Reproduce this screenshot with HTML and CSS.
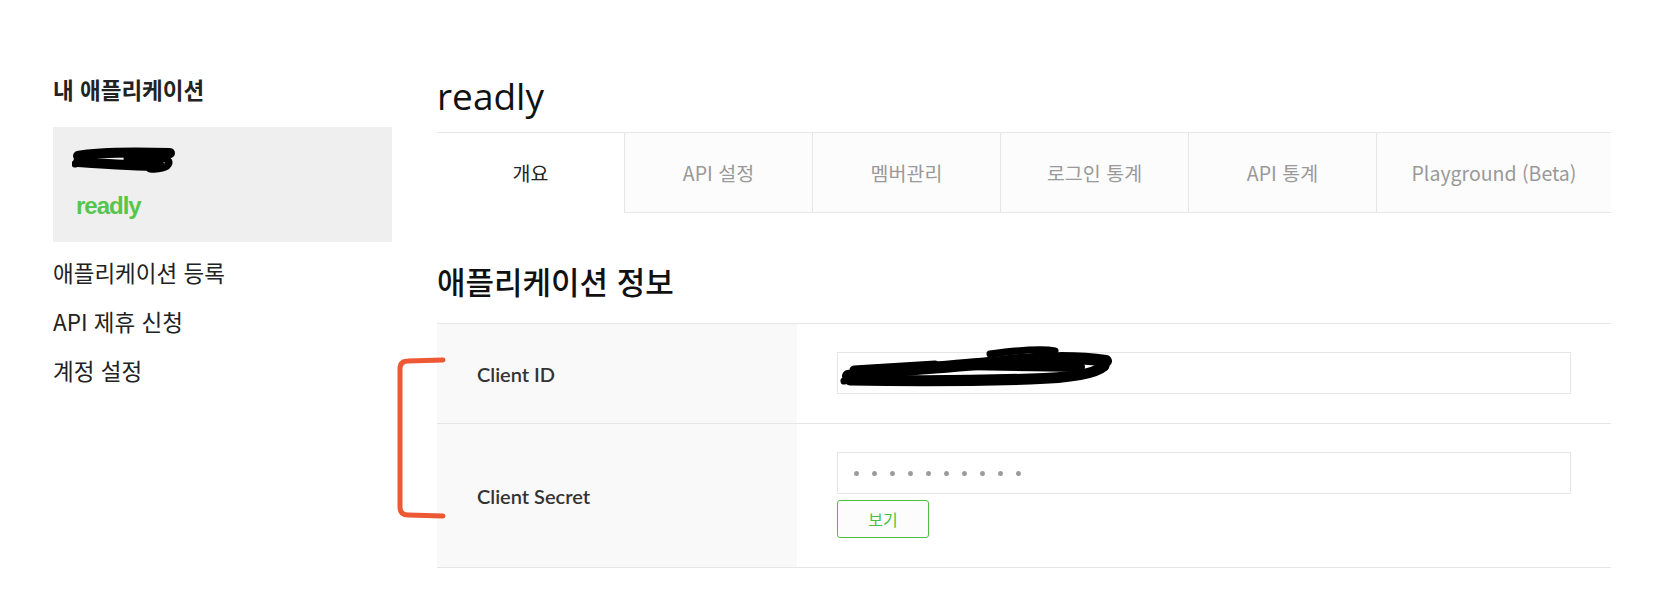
FILE: index.html
```html
<!DOCTYPE html>
<html lang="ko">
<head>
<meta charset="utf-8">
<title>readly - 내 애플리케이션</title>
<link rel="stylesheet" href="styles.css">
</head>
<body>
<div class="page">
  <aside class="sidebar">
    <h2 class="side-title">내 애플리케이션</h2>
    <div class="app-card">
      <div class="redact-small">
        <svg width="108" height="30" viewBox="0 0 108 30">
          <path d="M6,11 C25,7 60,7 98,8" fill="none" stroke="#000" stroke-width="10" stroke-linecap="round"/>
          <path d="M6,17 C35,19 70,21 88,21" fill="none" stroke="#000" stroke-width="10" stroke-linecap="round"/>
          <path d="M55,14 C80,12 98,12 97,18 C96,23 86,25 78,24" fill="none" stroke="#000" stroke-width="7" stroke-linecap="round"/>
          <path d="M3,19 L22,14" fill="none" stroke="#000" stroke-width="7" stroke-linecap="round"/>
        </svg>
      </div>
      <div class="app-name">readly</div>
    </div>
    <ul class="side-menu">
      <li>애플리케이션 등록</li>
      <li>API 제휴 신청</li>
      <li>계정 설정</li>
    </ul>
  </aside>

  <main class="content">
    <h1 class="app-title">readly</h1>
    <ul class="tabs">
      <li class="tab active">개요</li>
      <li class="tab">API 설정</li>
      <li class="tab">멤버관리</li>
      <li class="tab">로그인 통계</li>
      <li class="tab">API 통계</li>
      <li class="tab last">Playground (Beta)</li>
    </ul>

    <h2 class="section-title">애플리케이션 정보</h2>

    <div class="info-table">
      <svg class="bracket" width="54" height="168" viewBox="0 0 54 168">
        <path d="M48,5 L13,6 Q5,6 5,14 L5,152 Q5,160 13,160 L48,161" fill="none" stroke="#ec5934" stroke-width="5" stroke-linecap="round" stroke-linejoin="round"/>
      </svg>
      <div class="info-row row-id">
        <div class="info-label">Client ID</div>
        <div class="info-value">
          <div class="field">
            <svg class="scribble" width="276" height="42" viewBox="0 0 276 42">
              <path d="M8,31 C40,26 110,22 160,17 C200,12 240,12 266,16" fill="none" stroke="#000" stroke-width="12" stroke-linecap="round"/>
              <path d="M10,35 C60,36 130,36 190,34 C230,33 255,29 264,21" fill="none" stroke="#000" stroke-width="11" stroke-linecap="round"/>
              <path d="M14,25 L95,20" fill="none" stroke="#000" stroke-width="9" stroke-linecap="round"/>
              <path d="M120,20 L240,22" fill="none" stroke="#000" stroke-width="10" stroke-linecap="round"/>
              <path d="M150,9 C180,5 205,4 215,6" fill="none" stroke="#000" stroke-width="7" stroke-linecap="round"/>
              <path d="M4,36 L40,29" fill="none" stroke="#000" stroke-width="7" stroke-linecap="round"/>
            </svg>
          </div>
        </div>
      </div>
      <div class="info-row row-secret">
        <div class="info-label">Client Secret</div>
        <div class="info-value">
          <div class="field">
            <div class="dots"><i></i><i></i><i></i><i></i><i></i><i></i><i></i><i></i><i></i><i></i></div>
          </div>
          <button class="view-btn" type="button">보기</button>
        </div>
      </div>
    </div>
  </main>
</div>
</body>
</html>
```

FILE: styles.css
```css
* { box-sizing: border-box; }

html, body {
  margin: 0;
  padding: 0;
  background: #fff;
}

body {
  font-family: "Noto Sans CJK KR", "Noto Sans", sans-serif;
  color: #222;
}

.page {
  display: flex;
  gap: 45px;
  padding: 74px 0 0 53px;
}

/* ---------- sidebar ---------- */
.sidebar {
  width: 339px;
  flex: none;
}

.side-title {
  margin: 0 0 23px;
  font-size: 22.5px;
  font-weight: 700;
  line-height: 30px;
  color: #222;
}

.app-card {
  height: 115px;
  background: #efefef;
  padding: 18px 0 0 23px;
}

.redact-small {
  height: 30px;
  margin-left: -4px;
}

.redact-small svg { display: block; }

.app-name {
  margin-top: 16px;
  font-family: "Liberation Sans", Arial, sans-serif;
  font-weight: 700;
  font-size: 24px;
  line-height: 30px;
  letter-spacing: -1px;
  color: #56c64b;
}

.side-menu {
  list-style: none;
  margin: 6px 0 0;
  padding: 0;
}

.side-menu li {
  font-size: 22.5px;
  line-height: 49px;
  color: #222;
}

/* ---------- content ---------- */
.content {
  width: 1174px;
  flex: none;
}

.app-title {
  margin: 0 0 14px;
  font-family: "Open Sans", "Noto Sans", sans-serif;
  font-weight: 400;
  font-size: 37px;
  line-height: 44px;
  color: #111;
}

.tabs {
  display: flex;
  list-style: none;
  margin: 0;
  padding: 0;
  border-top: 1px solid #e6e6e6;
}

.tab {
  width: 188px;
  height: 80px;
  flex: none;
  display: flex;
  align-items: center;
  justify-content: center;
  background: #fcfcfc;
  border-left: 1px solid #e6e6e6;
  border-bottom: 1px solid #e6e6e6;
  font-size: 19.5px;
  color: #999;
}

.tab.active {
  width: 187px;
  background: #fff;
  border-left: none;
  border-bottom-color: #fff;
  color: #222;
}

.tab.last {
  flex: 1;
  width: auto;
}

.section-title {
  margin: 48px 0 22px;
  font-size: 31px;
  font-weight: 500;
  line-height: 40px;
  color: #111;
}

.info-table {
  position: relative;
  border-top: 1px solid #e6e6e6;
}

.bracket {
  position: absolute;
  left: -42px;
  top: 31px;
}

.info-row {
  display: flex;
  border-bottom: 1px solid #e6e6e6;
}

.info-label {
  width: 360px;
  flex: none;
  display: flex;
  align-items: center;
  padding-left: 40px;
  background: #f9f9f9;
  font-family: Lato, "Noto Sans", sans-serif;
  font-weight: 600;
  font-size: 20px;
  color: #333;
}

.info-value {
  flex: 1;
  padding: 28px 40px 28px;
}

.row-id .info-value {
  padding-bottom: 29px;
}

.row-secret .info-value {
  padding-bottom: 29px;
}

.field {
  position: relative;
  height: 42px;
  border: 1px solid #e6e6e6;
  background: #fff;
  display: flex;
  align-items: center;
  padding-left: 16px;
}

.scribble {
  position: absolute;
  left: 2px;
  top: -8px;
}

.dots {
  display: flex;
  gap: 13.5px;
}

.dots i {
  display: block;
  width: 4.5px;
  height: 5px;
  border-radius: 50%;
  background: #9a9a9a;
}

.view-btn {
  display: block;
  margin-top: 6px;
  width: 92px;
  height: 38px;
  padding: 0;
  border: 1px solid #4dbf40;
  border-radius: 3px;
  background: #fcfcfc;
  font-family: "Noto Sans CJK KR", sans-serif;
  font-size: 16px;
  color: #4dbf40;
}
```
